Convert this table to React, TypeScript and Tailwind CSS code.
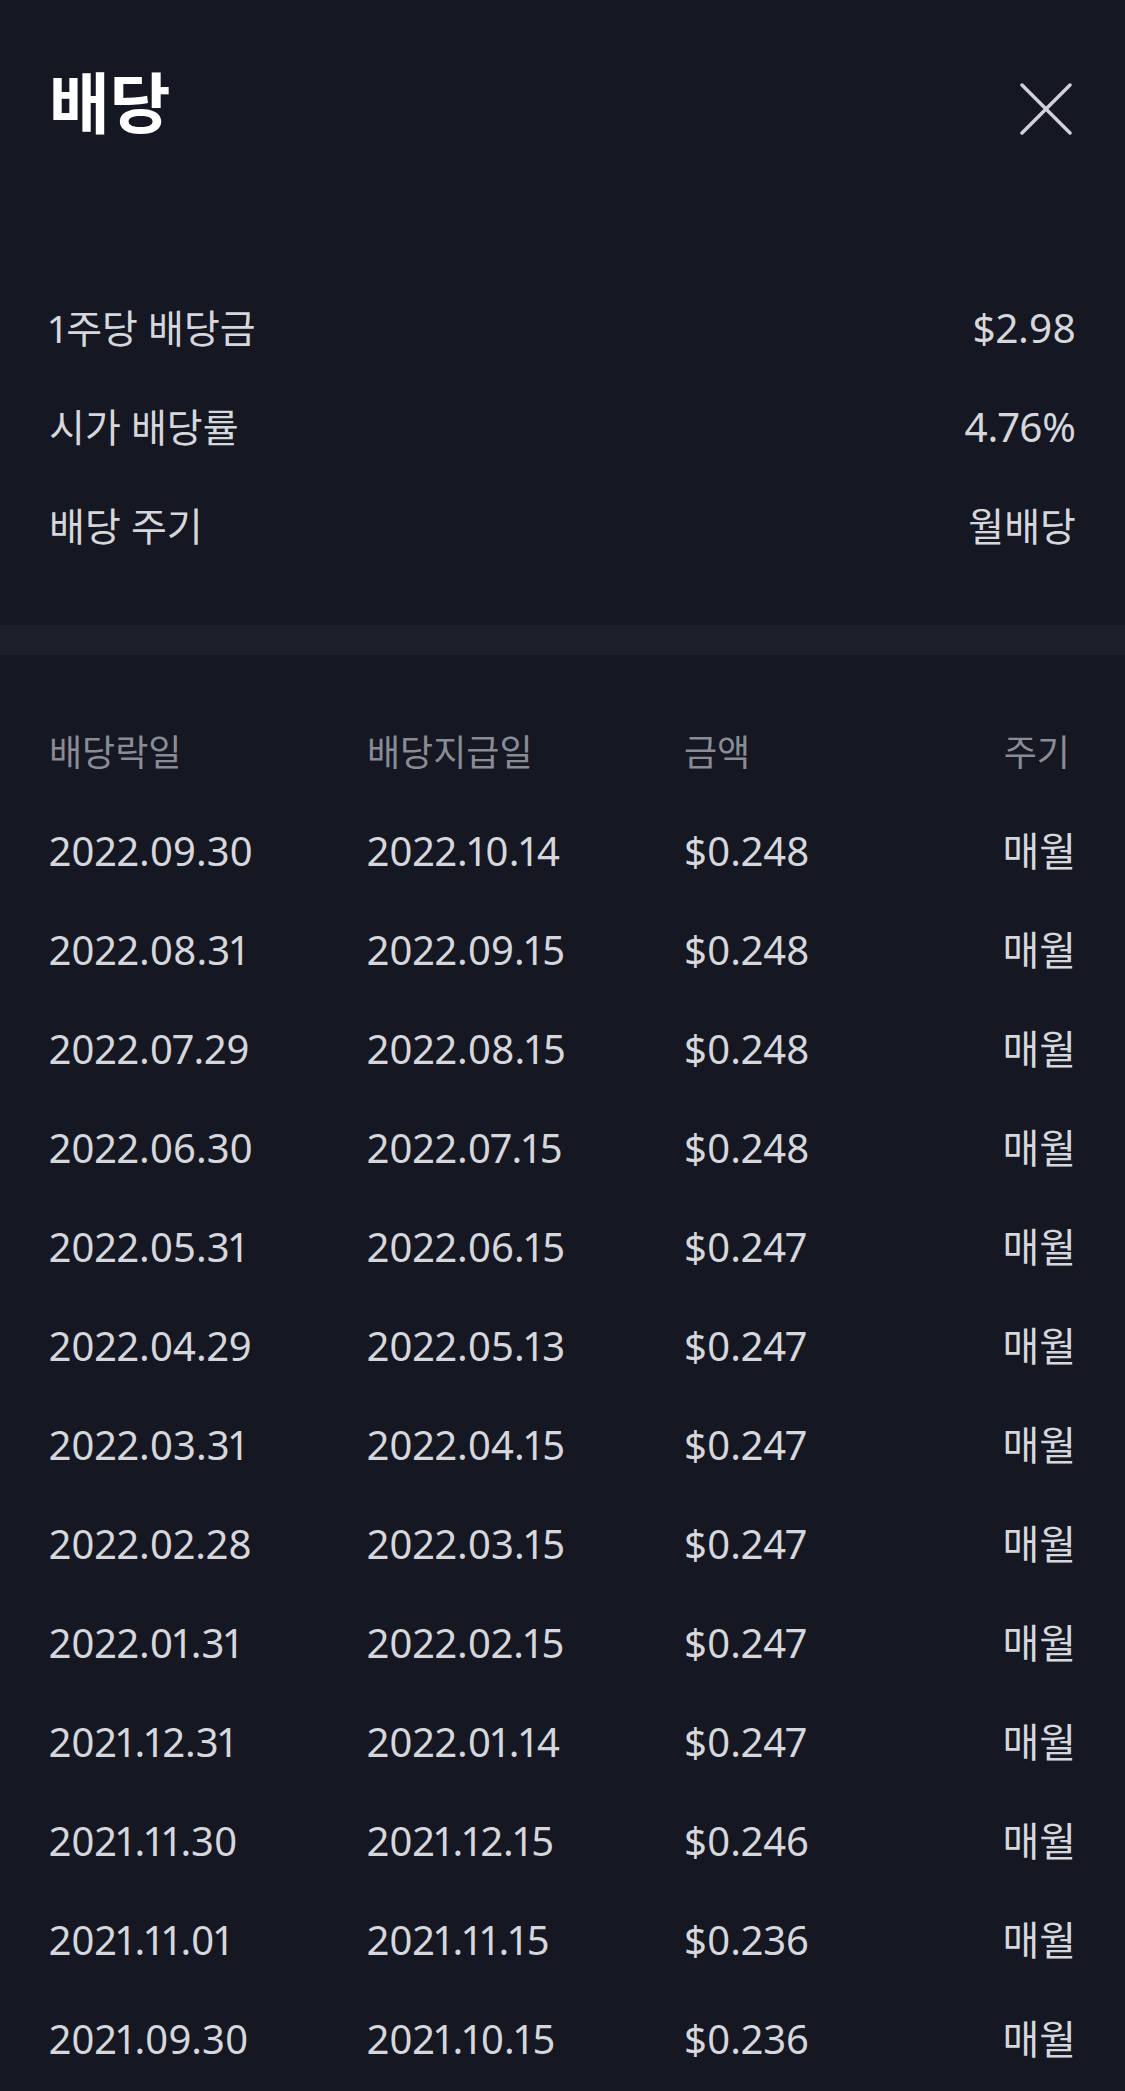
const FONT = { fontFamily: '"Noto Sans", "Noto Sans CJK KR", sans-serif' };

const SUMMARY: { label: string; value: string; num: boolean }[] = [
  { label: "1주당 배당금", value: "$2.98", num: true },
  { label: "시가 배당률", value: "4.76%", num: true },
  { label: "배당 주기", value: "월배당", num: false },
];

const ROWS: [string, string, string][] = [
  ["2022.09.30", "2022.10.14", "$0.248"],
  ["2022.08.31", "2022.09.15", "$0.248"],
  ["2022.07.29", "2022.08.15", "$0.248"],
  ["2022.06.30", "2022.07.15", "$0.248"],
  ["2022.05.31", "2022.06.15", "$0.247"],
  ["2022.04.29", "2022.05.13", "$0.247"],
  ["2022.03.31", "2022.04.15", "$0.247"],
  ["2022.02.28", "2022.03.15", "$0.247"],
  ["2022.01.31", "2022.02.15", "$0.247"],
  ["2021.12.31", "2022.01.14", "$0.247"],
  ["2021.11.30", "2021.12.15", "$0.246"],
  ["2021.11.01", "2021.11.15", "$0.236"],
  ["2021.09.30", "2021.10.15", "$0.236"],
];

const GRID = "grid grid-cols-[318px_317px_1fr_auto] items-center";

export default function App() {
  return (
    <div className="min-h-[2091px] w-[1125px] bg-[#151722] text-[#d6d7dd] proportional-nums" style={FONT}>
      {/* header */}
      <div className="flex h-[279px] items-start justify-between px-[49px]">
        <h1 className="pt-[64px] text-[66px] leading-[76px] font-bold text-white">배당</h1>
        <button type="button" aria-label="닫기" className="mt-[83px] mr-[4px]">
          <svg width="52" height="52" viewBox="0 0 52 52" fill="none">
            <path d="M2 2L50 50M50 2L2 50" stroke="#cfd0da" strokeWidth="3.5" strokeLinecap="round" />
          </svg>
        </button>
      </div>

      {/* summary */}
      <div className="px-[49px] pb-[49px]">
        {SUMMARY.map((s) => (
          <div key={s.label} className="flex h-[99px] items-center justify-between text-[39px]">
            <span>{s.label}</span>
            <span className={s.num ? "text-[40.5px]" : ""}>{s.value}</span>
          </div>
        ))}
      </div>

      <div className="h-[30px] bg-[#1d202b]" />

      {/* history table */}
      <div className="px-[49px] pt-[50px]">
        <div className={`${GRID} h-[96px] text-[36px] text-[#8a8c95]`}>
          <span>배당락일</span>
          <span>배당지급일</span>
          <span>금액</span>
          <span className="pr-[6px] text-right">주기</span>
        </div>
        {ROWS.map(([ex, pay, amt]) => (
          <div key={ex} className={`${GRID} h-[99px] text-[40px]`}>
            <span>{ex}</span>
            <span>{pay}</span>
            <span>{amt}</span>
            <span className="text-right">매월</span>
          </div>
        ))}
      </div>
    </div>
  );
}
